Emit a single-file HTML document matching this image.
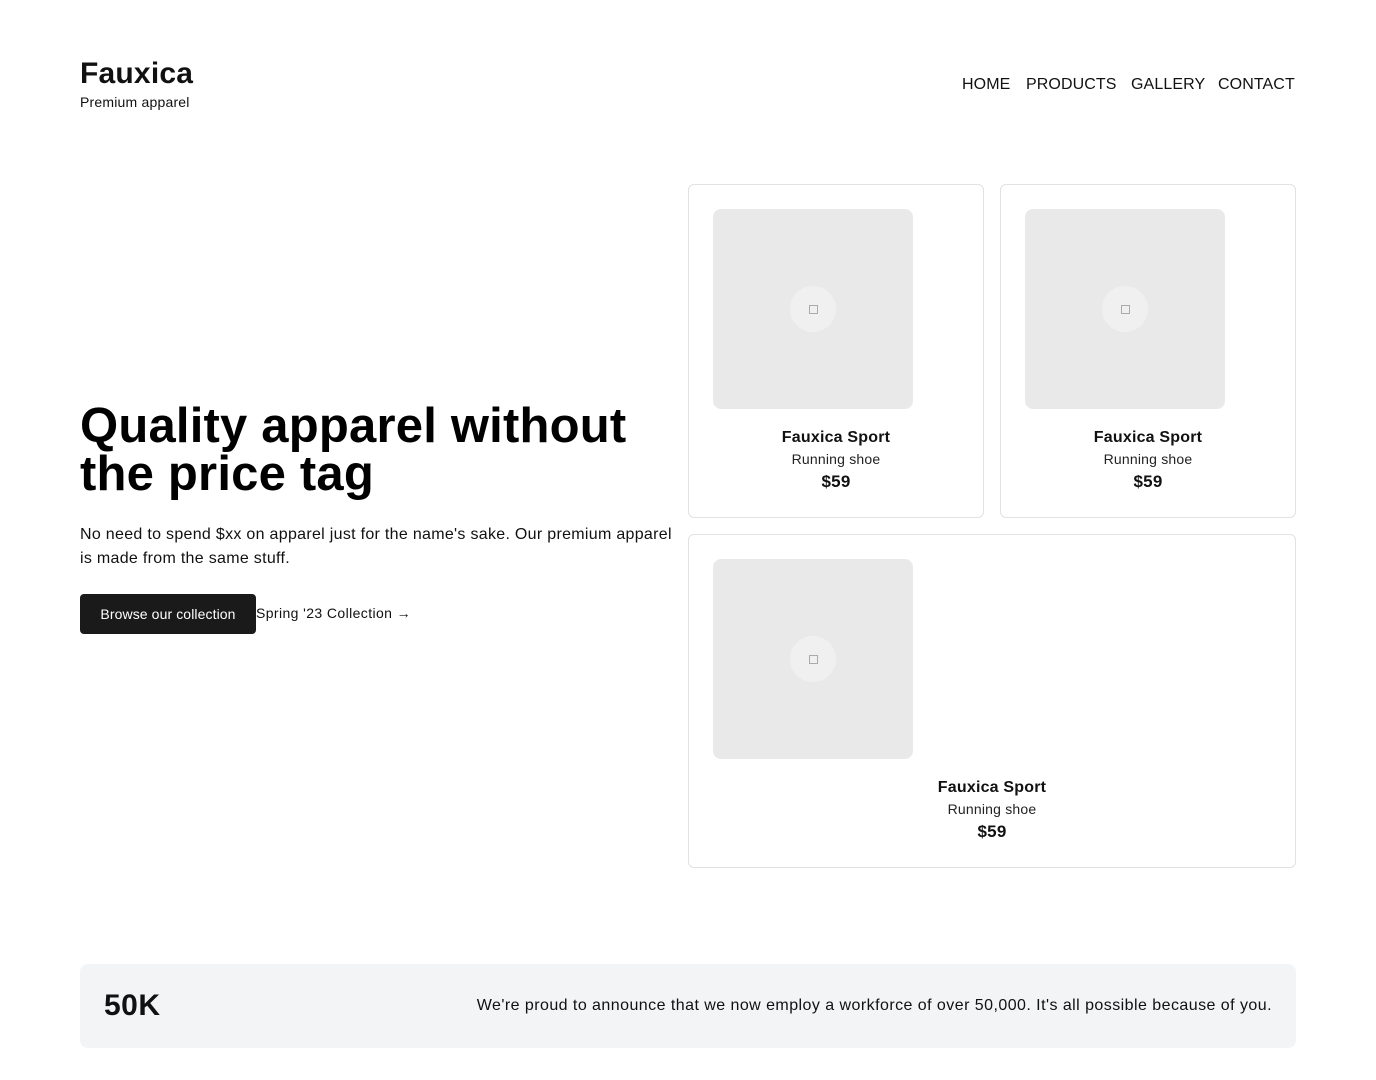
<!DOCTYPE html>
<html><head><style>
*{margin:0;padding:0;box-sizing:border-box}
body{width:1376px;height:1080px;background:#fff;font-family:"Liberation Sans",sans-serif;color:#111;position:relative;overflow:hidden;letter-spacing:0.2px}
.a{position:absolute}
.logo{left:80px;top:57px;font-size:30px;font-weight:bold;letter-spacing:0.2px}
.tag{left:80px;top:94px;font-size:14px}
.nav{top:76px;font-size:16px;letter-spacing:0.1px}
h1{position:absolute;left:80px;top:402px;font-size:49px;line-height:48px;font-weight:bold;letter-spacing:0.2px;width:570px;color:#000}
.p{left:80px;top:523px;font-size:16px;line-height:24px;width:608px;letter-spacing:0.3px}
.btn{left:80px;top:594px;width:176px;height:40px;background:#1a1a1a;color:#fff;border-radius:4px;font-size:14px;line-height:40px;text-align:center;letter-spacing:0.1px}
.lnk{left:256px;top:605px;font-size:14px;letter-spacing:0.4px}
.card{border:1px solid #e2e2e2;border-radius:6px}
.img{width:200px;height:200px;background:#e9e9e9;border-radius:8px}
.img::after{content:"";position:absolute;left:77px;top:77px;width:46px;height:46px;border-radius:50%;background:#f0f0f0}
.img::before{content:"";position:absolute;left:96px;top:96px;width:7px;height:7px;border:1px solid #aaa;z-index:2}
.t{text-align:center;font-size:16px;font-weight:bold}
.s{text-align:center;font-size:14px;color:#222}
.pr{text-align:center;font-size:17px;font-weight:bold}
.ban{left:80px;top:964px;width:1216px;height:84px;background:#f3f4f6;border-radius:8px}
</style></head><body>
<div class="a logo">Fauxica</div>
<div class="a tag">Premium apparel</div>
<div class="a nav" style="left:962px">HOME</div>
<div class="a nav" style="left:1026px">PRODUCTS</div>
<div class="a nav" style="left:1131px">GALLERY</div>
<div class="a nav" style="left:1218px">CONTACT</div>
<h1>Quality apparel without the price tag</h1>
<div class="a p">No need to spend $xx on apparel just for the name's sake. Our premium apparel is made from the same stuff.</div>
<div class="a btn">Browse our collection</div>
<div class="a lnk">Spring '23 Collection →</div>

<div class="a card" style="left:688px;top:184px;width:296px;height:334px"></div>
<div class="a img" style="left:713px;top:209px"></div>
<div class="a t" style="left:688px;width:296px;top:429px">Fauxica Sport</div>
<div class="a s" style="left:688px;width:296px;top:451px">Running shoe</div>
<div class="a pr" style="left:688px;width:296px;top:472px">$59</div>

<div class="a card" style="left:1000px;top:184px;width:296px;height:334px"></div>
<div class="a img" style="left:1025px;top:209px"></div>
<div class="a t" style="left:1000px;width:296px;top:429px">Fauxica Sport</div>
<div class="a s" style="left:1000px;width:296px;top:451px">Running shoe</div>
<div class="a pr" style="left:1000px;width:296px;top:472px">$59</div>

<div class="a card" style="left:688px;top:534px;width:608px;height:334px"></div>
<div class="a img" style="left:713px;top:559px"></div>
<div class="a t" style="left:688px;width:608px;top:779px">Fauxica Sport</div>
<div class="a s" style="left:688px;width:608px;top:801px">Running shoe</div>
<div class="a pr" style="left:688px;width:608px;top:822px">$59</div>

<div class="a ban"></div>
<div class="a" style="left:104px;top:989px;font-size:30px;font-weight:bold;letter-spacing:0.5px">50K</div>
<div class="a" style="right:104px;top:997px;font-size:16px;letter-spacing:0.45px">We're proud to announce that we now employ a workforce of over 50,000. It's all possible because of you.</div>
</body></html>
